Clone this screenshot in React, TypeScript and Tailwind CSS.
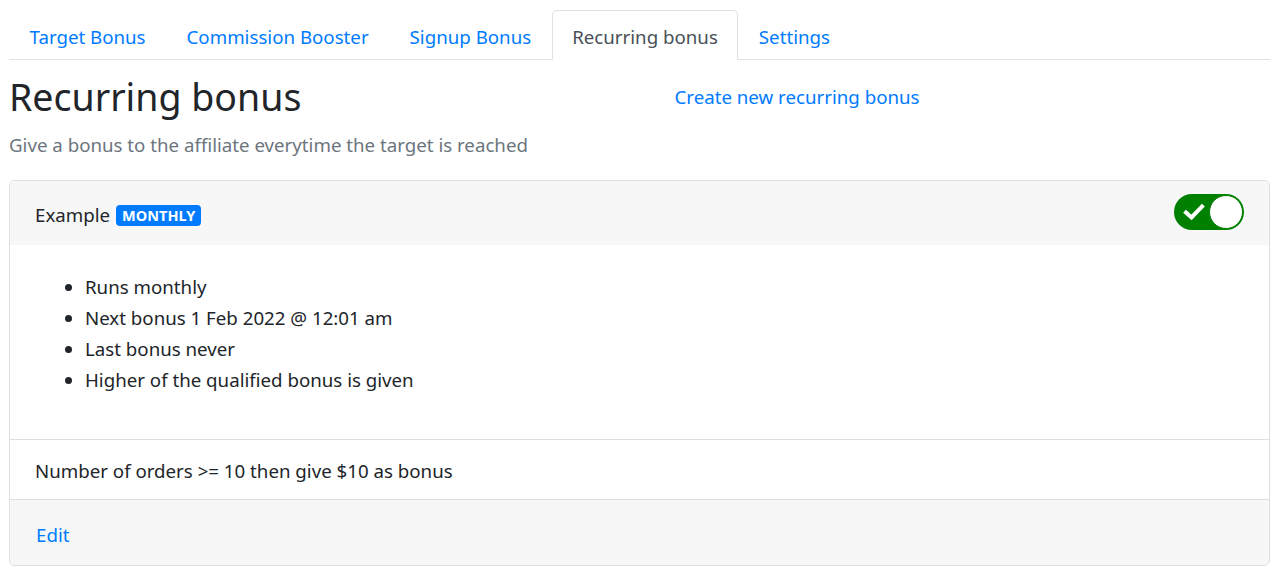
import React from "react";

const tabs = ["Target Bonus", "Commission Booster", "Signup Bonus", "Recurring bonus", "Settings"];

const details = [
  "Runs monthly",
  "Next bonus 1 Feb 2022 @ 12:01 am",
  "Last bonus never",
  "Higher of the qualified bonus is given",
];

export default function App() {
  return (
    <div
      className="min-h-screen bg-white pl-[9px] pr-[7px] pt-[10px] text-[18.7px] leading-[30px] text-[#212529]"
      style={{ fontFamily: '"Segoe UI", "Noto Sans", "Open Sans", sans-serif' }}
    >
      {/* tabs */}
      <div className="flex border-b border-[#dee2e6]">
        {tabs.map((t) => {
          const active = t === "Recurring bonus";
          return (
            <div
              key={t}
              className={
                active
                  ? "-mb-px rounded-t-[5px] border border-[#dee2e6] border-b-white bg-white px-[19.5px] pt-[11px] pb-[7px] text-[#495057]"
                  : "-mb-px border border-transparent px-[19.5px] pt-[11px] pb-[7px] text-[#007bff]"
              }
            >
              {t}
            </div>
          );
        })}
      </div>

      {/* heading row */}
      <div className="mt-[13px] grid grid-cols-2">
        <h2 className="text-[37.5px] leading-[48px] font-normal">Recurring bonus</h2>
        <div className="flex items-center pl-[35px]">
          <a className="text-[#007bff]">Create new recurring bonus</a>
        </div>
      </div>
      <p className="mt-[9px] text-[#6c757d]">Give a bonus to the affiliate everytime the target is reached</p>

      {/* card */}
      <div className="mt-[20px] overflow-hidden rounded-[5px] border border-[#dfdfdf]">
        <div className="flex h-[64px] items-center justify-between bg-[#f7f7f7] px-[25px]">
          <div className="mt-[3px] flex items-center gap-[6px]">
            <span>Example</span>
            <span className="mt-[1px] rounded-[4px] bg-[#007bff] px-[6px] text-[14.5px] leading-[21px] font-bold text-white">
              MONTHLY
            </span>
          </div>
          <div className="-mt-[2px] flex h-[36px] w-[70px] items-center justify-between rounded-full bg-[#008000] pl-[9px] pr-[1px]">
            <svg width="22" height="18" viewBox="0 0 22 18" fill="none">
              <path d="M3 9.5 L8.5 14.5 L19 3.5" stroke="white" strokeWidth="4" strokeLinecap="square" />
            </svg>
            <div className="h-[34px] w-[34px] rounded-full border border-[#008000] bg-white" />
          </div>
        </div>

        <div className="px-[25px] pt-[26px] pb-[24px]">
          <ul className="mb-[20px] list-disc pl-[50px] leading-[31px]">
            {details.map((d) => (
              <li key={d}>{d}</li>
            ))}
          </ul>
        </div>

        <div className="border-t border-[#dfdfdf] px-[25px] pt-[16px] pb-[13px]">
          Number of orders &gt;= 10 then give $10 as bonus
        </div>

        <div className="border-t border-[#dfdfdf] bg-[#f7f7f7] px-[25px] pt-[20px] pb-[15px]">
          <a className="ml-[1px] text-[#007bff]">Edit</a>
        </div>
      </div>
    </div>
  );
}
